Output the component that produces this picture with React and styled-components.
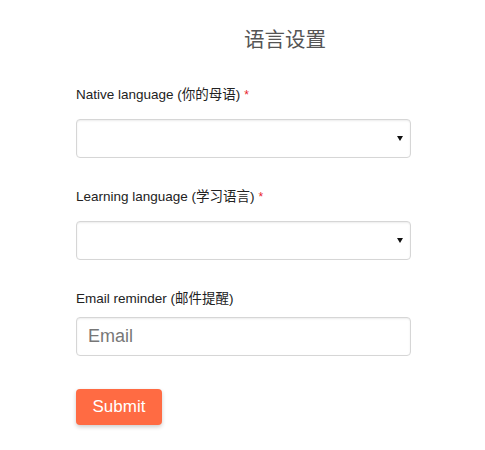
import React from "react";
import styled, { createGlobalStyle } from "styled-components";

const GlobalStyle = createGlobalStyle`
  body {
    margin: 0;
    background: #fff;
    font-family: "Liberation Sans", Arial, "Noto Sans CJK SC", sans-serif;
  }
`;

const Page = styled.div`
  width: 485px;
  height: 450px;
  padding: 24px 0 0 76px;
  box-sizing: border-box;
`;

const Title = styled.h1`
  margin: 0 0 0 168px;
  width: 84px;
  font-size: 20.5px;
  font-weight: normal;
  color: #555;
  line-height: 28px;
  font-family: "Noto Sans CJK SC", sans-serif;
  white-space: nowrap;
`;

const Form = styled.form`
  width: 335px;
  margin-top: 34px;
  display: flex;
  flex-direction: column;
`;

const Field = styled.div`
  display: flex;
  flex-direction: column;
  margin-bottom: ${(p) => p.$gap || 30}px;
`;

const Label = styled.label`
  font-size: 13.5px;
  color: #222;
  line-height: 18px;
  margin-bottom: ${(p) => p.$space || 15}px;
  font-family: "Liberation Sans", Arial, "Noto Sans CJK SC", sans-serif;
`;

const Required = styled.span`
  color: #e8232b;
  margin-left: 4px;
  font-size: 12px;
`;

const SelectBox = styled.div`
  position: relative;
  height: 39px;
  border: 1px solid #d6d6d6;
  border-radius: 4px;
  box-sizing: border-box;
  box-shadow: inset 0 1px 2px rgba(0, 0, 0, 0.08);
  background: #fff;
`;

const Arrow = styled.span`
  position: absolute;
  right: 7px;
  top: 16px;
  width: 0;
  height: 0;
  border-left: 3px solid transparent;
  border-right: 3px solid transparent;
  border-top: 5px solid #111;
`;

const Input = styled.input`
  height: 39px;
  border: 1px solid #d6d6d6;
  border-radius: 4px;
  box-sizing: border-box;
  box-shadow: inset 0 1px 2px rgba(0, 0, 0, 0.08);
  padding: 0 11px;
  font-size: 18px;
  font-family: "Liberation Sans", Arial, sans-serif;
  outline: none;
  &::placeholder {
    color: #777;
  }
`;

const Button = styled.button`
  align-self: flex-start;
  width: 86px;
  height: 36px;
  border: 0;
  border-radius: 4px;
  background: #ff6b43;
  color: #fff;
  font-size: 17px;
  font-family: "Liberation Sans", Arial, sans-serif;
  box-shadow: 0 2px 4px rgba(0, 0, 0, 0.2);
  cursor: pointer;
`;

export default function App() {
  return (
    <Page>
      <GlobalStyle />
      <Title>语言设置</Title>
      <Form onSubmit={(e) => e.preventDefault()}>
        <Field>
          <Label>
            Native language (你的母语)<Required>*</Required>
          </Label>
          <SelectBox>
            <Arrow />
          </SelectBox>
        </Field>
        <Field>
          <Label>
            Learning language (学习语言)<Required>*</Required>
          </Label>
          <SelectBox>
            <Arrow />
          </SelectBox>
        </Field>
        <Field $gap={33}>
          <Label $space={9}>Email reminder (邮件提醒)</Label>
          <Input placeholder="Email" />
        </Field>
        <Button type="submit">Submit</Button>
      </Form>
    </Page>
  );
}
